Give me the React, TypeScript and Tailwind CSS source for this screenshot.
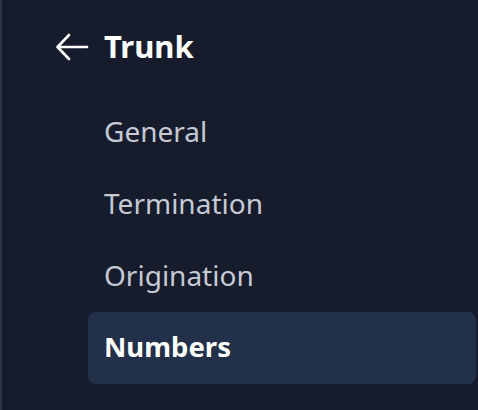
import React from "react";

export default function App() {
  const items = ["General", "Termination", "Origination", "Numbers"];
  return (
    <div
      className="h-[410px] w-[478px] overflow-hidden bg-[#161c2c] border-l-2 border-[#2e3443]"
      style={{ fontFamily: '"Noto Sans", sans-serif' }}
    >
      <div className="flex items-center h-[96px] pl-[53px] pb-[3px]">
        <svg width="34" height="30" viewBox="0 0 34 30" fill="none" stroke="white" strokeWidth="2.6" strokeLinecap="round" strokeLinejoin="round">
          <path d="M32 15H3" />
          <path d="M14 3L2.5 15L14 27" />
        </svg>
        <span className="ml-[15px] text-[31px] font-bold text-white leading-none">Trunk</span>
      </div>
      <div className="flex flex-col pl-[86px] pr-[2px]">
        {items.map((it) => {
          const active = it === "Numbers";
          return (
            <div
              key={it}
              className={
                "h-[72px] flex items-center px-4 pb-[3px] rounded-lg " +
                (active ? "bg-[#22304a] text-white font-bold text-[27.5px]" : "text-[#c5cad5] text-[28px]")
              }
            >
              {it}
            </div>
          );
        })}
      </div>
    </div>
  );
}
